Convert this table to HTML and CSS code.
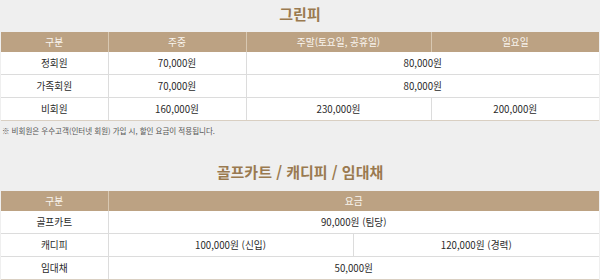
FILE: index.html
```html
<!DOCTYPE html>
<html lang="ko">
<head>
<meta charset="utf-8">
<link rel="stylesheet" href="styles.css">
</head>
<body>
<section class="fee">
  <h2 class="title">그린피</h2>
  <table class="tbl">
    <colgroup><col class="c1"><col class="c2"><col class="c3"><col></colgroup>
    <thead>
      <tr><th>구분</th><th>주중</th><th>주말(토요일, 공휴일)</th><th>일요일</th></tr>
    </thead>
    <tbody>
      <tr><td>정회원</td><td>70,000원</td><td colspan="2">80,000원</td></tr>
      <tr><td>가족회원</td><td>70,000원</td><td colspan="2">80,000원</td></tr>
      <tr><td>비회원</td><td>160,000원</td><td>230,000원</td><td>200,000원</td></tr>
    </tbody>
  </table>
  <p class="note">※ 비회원은 우수고객(인터넷 회원) 가입 시, 할인 요금이 적용됩니다.</p>
</section>
<section class="fee fee2">
  <h2 class="title">골프카트 / 캐디피 / 임대채</h2>
  <table class="tbl">
    <colgroup><col class="c1"><col class="c5"><col></colgroup>
    <thead>
      <tr><th>구분</th><th colspan="2">요금</th></tr>
    </thead>
    <tbody>
      <tr><td>골프카트</td><td colspan="2">90,000원 (팀당)</td></tr>
      <tr><td>캐디피</td><td>100,000원 (신입)</td><td>120,000원 (경력)</td></tr>
      <tr><td>임대채</td><td colspan="2">50,000원</td></tr>
    </tbody>
  </table>
</section>
</body>
</html>
```
FILE: styles.css
```css
html, body {
  margin: 0;
  padding: 0;
  background: #efefef;
}
body {
  font-family: "Noto Sans CJK KR", "Noto Sans", sans-serif;
  color: #333;
}
.fee {
  padding: 0 1px;
}
.title {
  margin: 0 0 8px;
  padding-top: 4px;
  font-size: 15px;
  line-height: 20px;
  font-weight: 700;
  color: #9a7a50;
  text-align: center;
}
.fee2 .title {
  margin-bottom: 9px;
}
.fee2 {
  padding-top: 21px;
}
.tbl {
  width: 598px;
  border-collapse: collapse;
  table-layout: fixed;
  font-size: 9.7px;
  text-align: center;
}
.c1 { width: 107px; }
.c2 { width: 138px; }
.c3 { width: 185px; }
.c5 { width: 245px; }
.tbl th {
  height: 20px;
  padding: 0;
  background: #bca283;
  color: #faf6f0;
  font-weight: 400;
  border-left: 1px solid #d8c8b2;
}
.tbl th:first-child { border-left: 0; }
.tbl td {
  height: 22px;
  padding: 0;
  background: #fff;
  color: #2a2a2a;
  border-bottom: 1px solid #dcdcdc;
  border-left: 1px solid #dcdcdc;
}
.tbl td:first-child { border-left: 0; }
.tbl tbody tr:last-child td { border-bottom-color: #d9cfc2; }
.note {
  margin: 4px 0 0 1px;
  font-size: 7.5px;
  line-height: 12px;
  color: #555;
}
```
